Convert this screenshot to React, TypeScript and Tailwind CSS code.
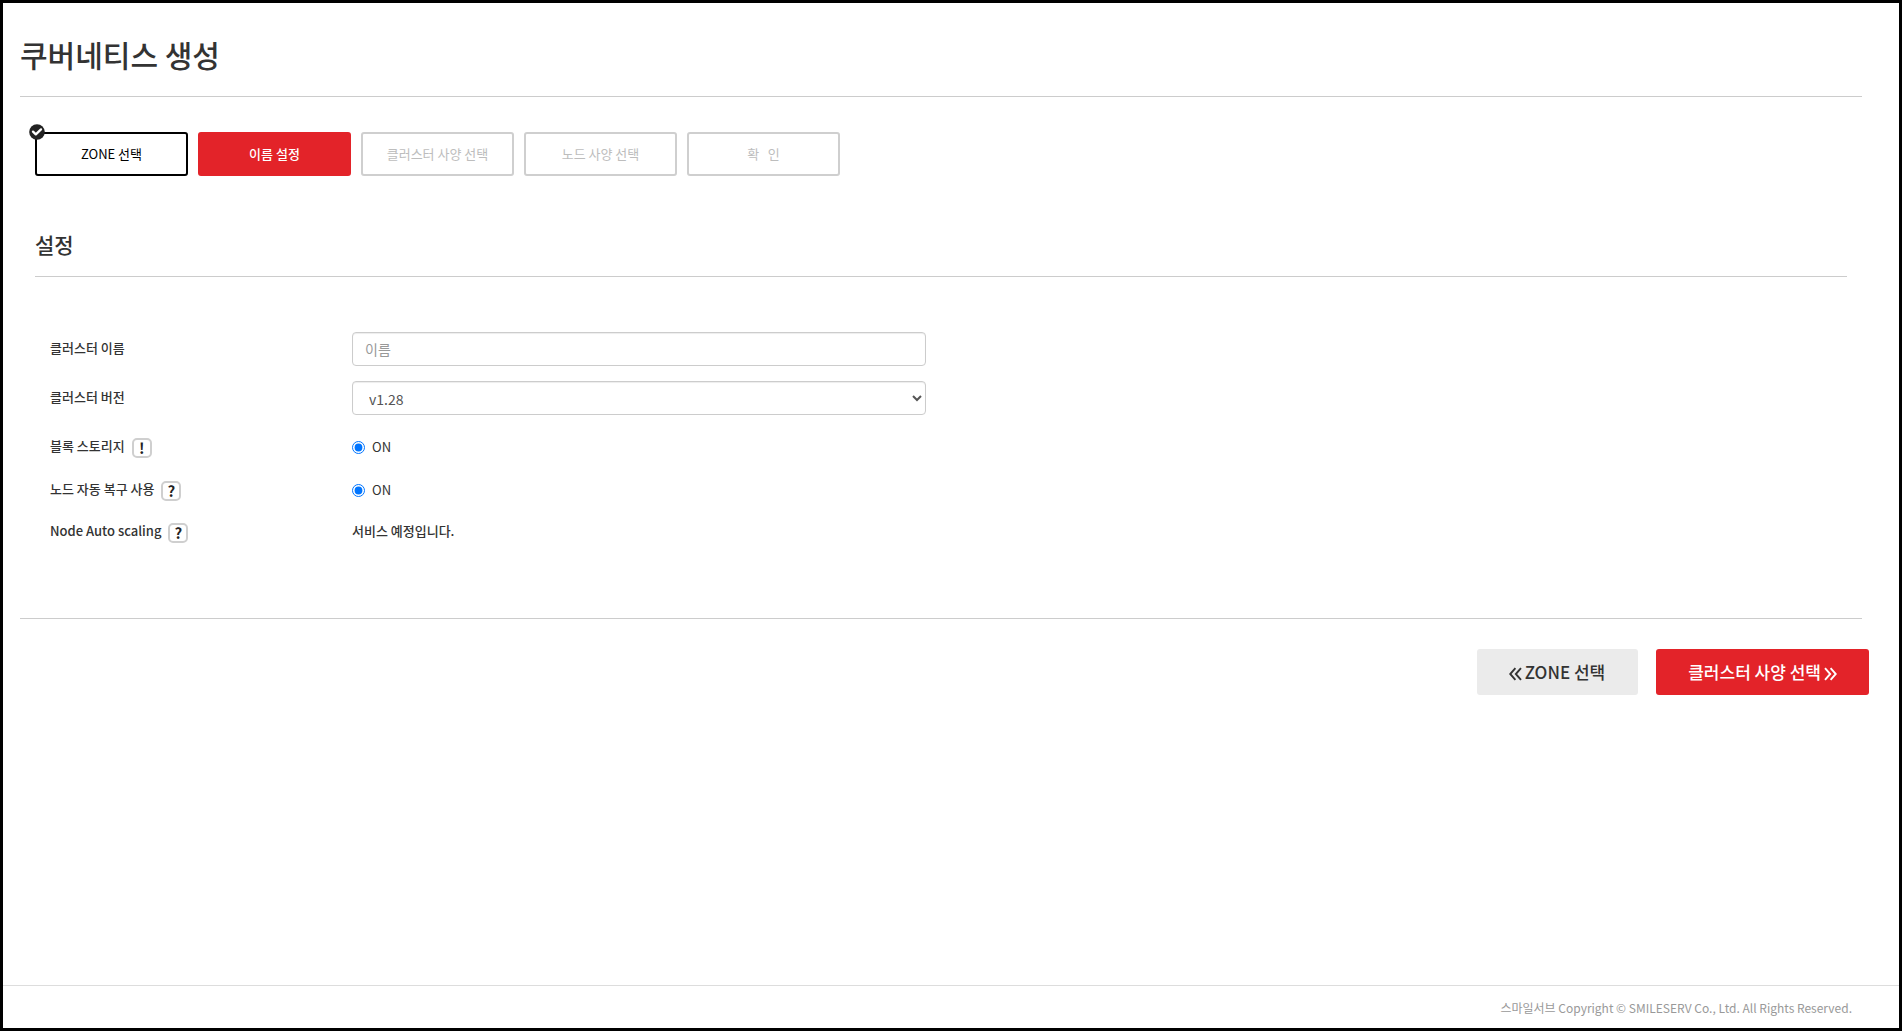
import type { ReactNode } from "react";

type StepState = "done" | "current" | "upcoming";

const steps: { label: string; state: StepState }[] = [
  { label: "ZONE 선택", state: "done" },
  { label: "이름 설정", state: "current" },
  { label: "클러스터 사양 선택", state: "upcoming" },
  { label: "노드 사양 선택", state: "upcoming" },
  { label: "확\u00a0\u00a0\u00a0인", state: "upcoming" },
];

const stepStyle: Record<StepState, string> = {
  done: "border-black bg-white text-black",
  current: "border-[#e32329] bg-[#e32329] font-medium text-white",
  upcoming: "border-[#cfcfcf] bg-white text-[#bdbdbd]",
};

function CheckBadge() {
  return (
    <svg
      className="absolute -left-2 -top-2.5 size-4"
      viewBox="0 0 16 16"
      aria-hidden="true"
    >
      <circle cx="8" cy="8" r="7.8" fill="#222" />
      <path
        d="M4 7.6l2.8 2.8 5.2-5"
        fill="none"
        stroke="#fff"
        strokeWidth="2.3"
        strokeLinecap="round"
        strokeLinejoin="round"
      />
    </svg>
  );
}

function Step({ label, state }: { label: string; state: StepState }) {
  return (
    <li>
      <button
        type="button"
        className={`relative flex h-11 w-[153px] items-center justify-center rounded-[3px] border-2 text-[13px] ${stepStyle[state]}`}
      >
        {state === "done" && <CheckBadge />}
        {label}
      </button>
    </li>
  );
}

function Hint({ mark, label }: { mark: string; label: string }) {
  return (
    <button
      type="button"
      aria-label={label}
      className="mt-px flex size-5 items-center justify-center rounded-[5px] border-2 border-[#cfcfcf] text-[15px] font-bold leading-4 text-[#222]"
    >
      {mark}
    </button>
  );
}

function Row({
  label,
  htmlFor,
  hint,
  className,
  children,
}: {
  label: string;
  htmlFor?: string;
  hint?: string;
  className: string;
  children: ReactNode;
}) {
  return (
    <div className={`grid grid-cols-6 ${className}`}>
      <div className="flex items-center gap-[7px] px-[15px] font-medium">
        {htmlFor ? (
          <label htmlFor={htmlFor} className="pb-0.5">
            {label}
          </label>
        ) : (
          <span className="pb-0.5">{label}</span>
        )}
        {hint && <Hint mark={hint} label={`${label} 도움말`} />}
      </div>
      <div className="col-span-2 flex items-center px-[15px]">{children}</div>
    </div>
  );
}

function OnRadio({ id, name }: { id: string; name: string }) {
  return (
    <label className="flex items-center gap-[7px]">
      <input id={id} name={name} type="radio" defaultChecked className="mt-px size-[13px]" />
      ON
    </label>
  );
}

function Chevrons({ flip }: { flip?: boolean }) {
  return (
    <svg
      className={flip ? "mt-1 h-[14px] w-[13px] rotate-180" : "mt-1 h-[14px] w-[13px]"}
      viewBox="0 0 13 14"
      fill="none"
      stroke="currentColor"
      strokeWidth="1.9"
      aria-hidden="true"
    >
      <path d="M6.4 1.2L1.2 7l5.2 5.8M12 1.2L6.8 7l5.2 5.8" />
    </svg>
  );
}

export default function App() {
  return (
    <div className="flex min-h-screen flex-col border-[3px] border-black bg-white font-['Noto_Sans_CJK_KR',sans-serif] text-[13px] leading-5 text-[#333]">
      <main className="grow pl-[17px] pr-[37px]">
        <h1 className="border-b border-[#ccc] pb-5 pt-[29px] text-[30px] font-medium leading-[44px]">
          쿠버네티스 생성
        </h1>

        <ol className="mt-[35px] flex gap-2.5 px-[15px]">
          {steps.map((step) => (
            <Step key={step.label} label={step.label} state={step.state} />
          ))}
        </ol>

        <form className="border-b border-[#ccc] px-[15px] pb-[75px] pt-[53px]">
          <h2 className="border-b border-[#ccc] pb-[17px] text-[21px] font-medium leading-[30px]">
            설정
          </h2>

          <Row label="클러스터 이름" htmlFor="cluster-name" className="mt-[55px] h-[34px]">
            <input
              id="cluster-name"
              type="text"
              placeholder="이름"
              className="h-[34px] w-full rounded-[4px] border border-[#ccc] px-3 text-[14px] text-[#555] shadow-[inset_0_1px_1px_rgba(0,0,0,0.075)] placeholder:text-[#999]"
            />
          </Row>
          <Row label="클러스터 버전" htmlFor="cluster-version" className="mt-[15px] h-[34px]">
            <select
              id="cluster-version"
              className="h-[34px] w-full rounded-[4px] border border-[#ccc] bg-white pl-3 pt-0.5 text-[14px] text-[#555] shadow-[inset_0_1px_1px_rgba(0,0,0,0.075)]"
            >
              <option>v1.28</option>
            </select>
          </Row>
          <Row label="블록 스토리지" htmlFor="block-storage" hint="!" className="mt-[21px]">
            <OnRadio id="block-storage" name="block-storage" />
          </Row>
          <Row label="노드 자동 복구 사용" htmlFor="node-repair" hint="?" className="mt-[21px]">
            <OnRadio id="node-repair" name="node-repair" />
          </Row>
          <Row label="Node Auto scaling" hint="?" className="mt-5">
            <p className="pb-0.5 font-medium">서비스 예정입니다.</p>
          </Row>
        </form>

        <div className="-mr-[7px] mt-[30px] flex justify-end gap-[18px] text-[17px] font-medium">
          <button
            type="button"
            className="flex h-[46px] items-center gap-[3px] rounded-[3px] bg-[#ebebeb] pl-8 pr-[33px]"
          >
            <Chevrons />
            ZONE 선택
          </button>
          <button
            type="button"
            className="flex h-[46px] items-center gap-[3px] rounded-[3px] bg-[#e32329] px-8 text-white"
          >
            클러스터 사양 선택
            <Chevrons flip />
          </button>
        </div>
      </main>

      <footer className="border-t border-[#ddd] pb-2.5 pr-[47px] pt-3 text-right text-[12px] text-[#999]">
        스마일서브 Copyright © SMILESERV Co., Ltd. All Rights Reserved.
      </footer>
    </div>
  );
}
